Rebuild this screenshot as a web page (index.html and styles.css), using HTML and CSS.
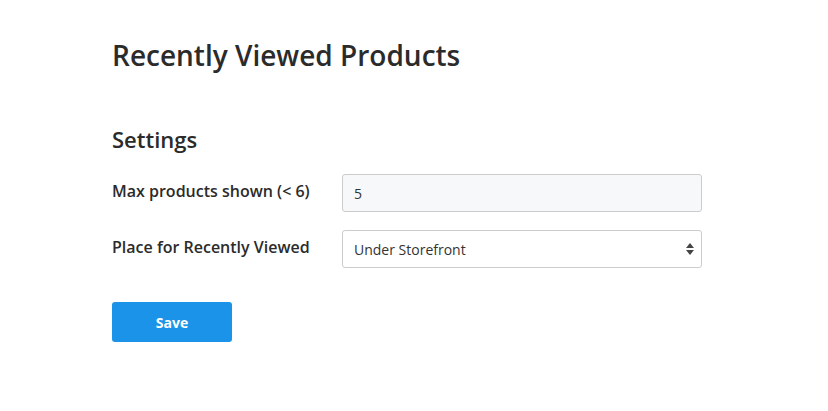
FILE: index.html
```html
<!DOCTYPE html>
<html>
<head>
    <title>Recently Viewed Products</title>
    <link rel="stylesheet" href="styles.css">
</head>
<body>
    <main class="page">
        <h1 class="page-title">Recently Viewed Products</h1>
        <section class="settings">
            <h2 class="settings-title">Settings</h2>
            <div class="form-row">
                <label class="form-label" for="max-products">Max products shown (&lt; 6)</label>
                <input class="form-input" id="max-products" type="text" value="5">
            </div>
            <div class="form-row">
                <label class="form-label" for="place">Place for Recently Viewed</label>
                <div class="select-wrap">
                    <select class="form-select" id="place">
                        <option>Under Storefront</option>
                    </select>
                    <svg class="select-arrows" width="8" height="12" viewBox="0 0 8 12">
                        <path d="M4 0 L8 5 H0 Z" fill="#444"/>
                        <path d="M4 12 L8 7 H0 Z" fill="#444"/>
                    </svg>
                </div>
            </div>
            <button class="save-btn" type="button">Save</button>
        </section>
    </main>
</body>
</html>
```

FILE: styles.css
```css
body {
    margin: 0;
    padding: 0;
    font-family: "Open Sans", sans-serif;
    color: #2b2b2b;
    background-color: #fff;
}
.page {
    padding: 37px 112px;
}
.page-title {
    margin: 0;
    font-size: 28px;
    font-weight: 600;
    line-height: 36px;
}
.settings {
    margin-top: 52px;
}
.settings-title {
    margin: 0 0 21px;
    font-size: 22px;
    font-weight: 600;
    line-height: 28px;
}
.form-row {
    display: flex;
    align-items: flex-start;
    margin-bottom: 18px;
}
.form-label {
    width: 230px;
    padding-top: 6px;
    font-size: 16px;
    font-weight: 600;
    line-height: 22px;
}
.form-input,
.form-select {
    box-sizing: border-box;
    width: 360px;
    height: 38px;
    padding: 0 11px;
    border: 1px solid #ccc;
    border-radius: 3px;
    font-family: "Open Sans", sans-serif;
    font-size: 14px;
    color: #333;
}
.form-input {
    background-color: #f7f8fa;
}
.select-wrap {
    position: relative;
}
.form-select {
    appearance: none;
    background-color: #fff;
}
.select-arrows {
    position: absolute;
    right: 8px;
    top: 13px;
}
.save-btn {
    margin-top: 16px;
    width: 120px;
    height: 40px;
    border: none;
    border-radius: 3px;
    background-color: #1a93e9;
    color: #fff;
    font-family: "Open Sans", sans-serif;
    font-size: 14px;
    font-weight: 700;
}
```
